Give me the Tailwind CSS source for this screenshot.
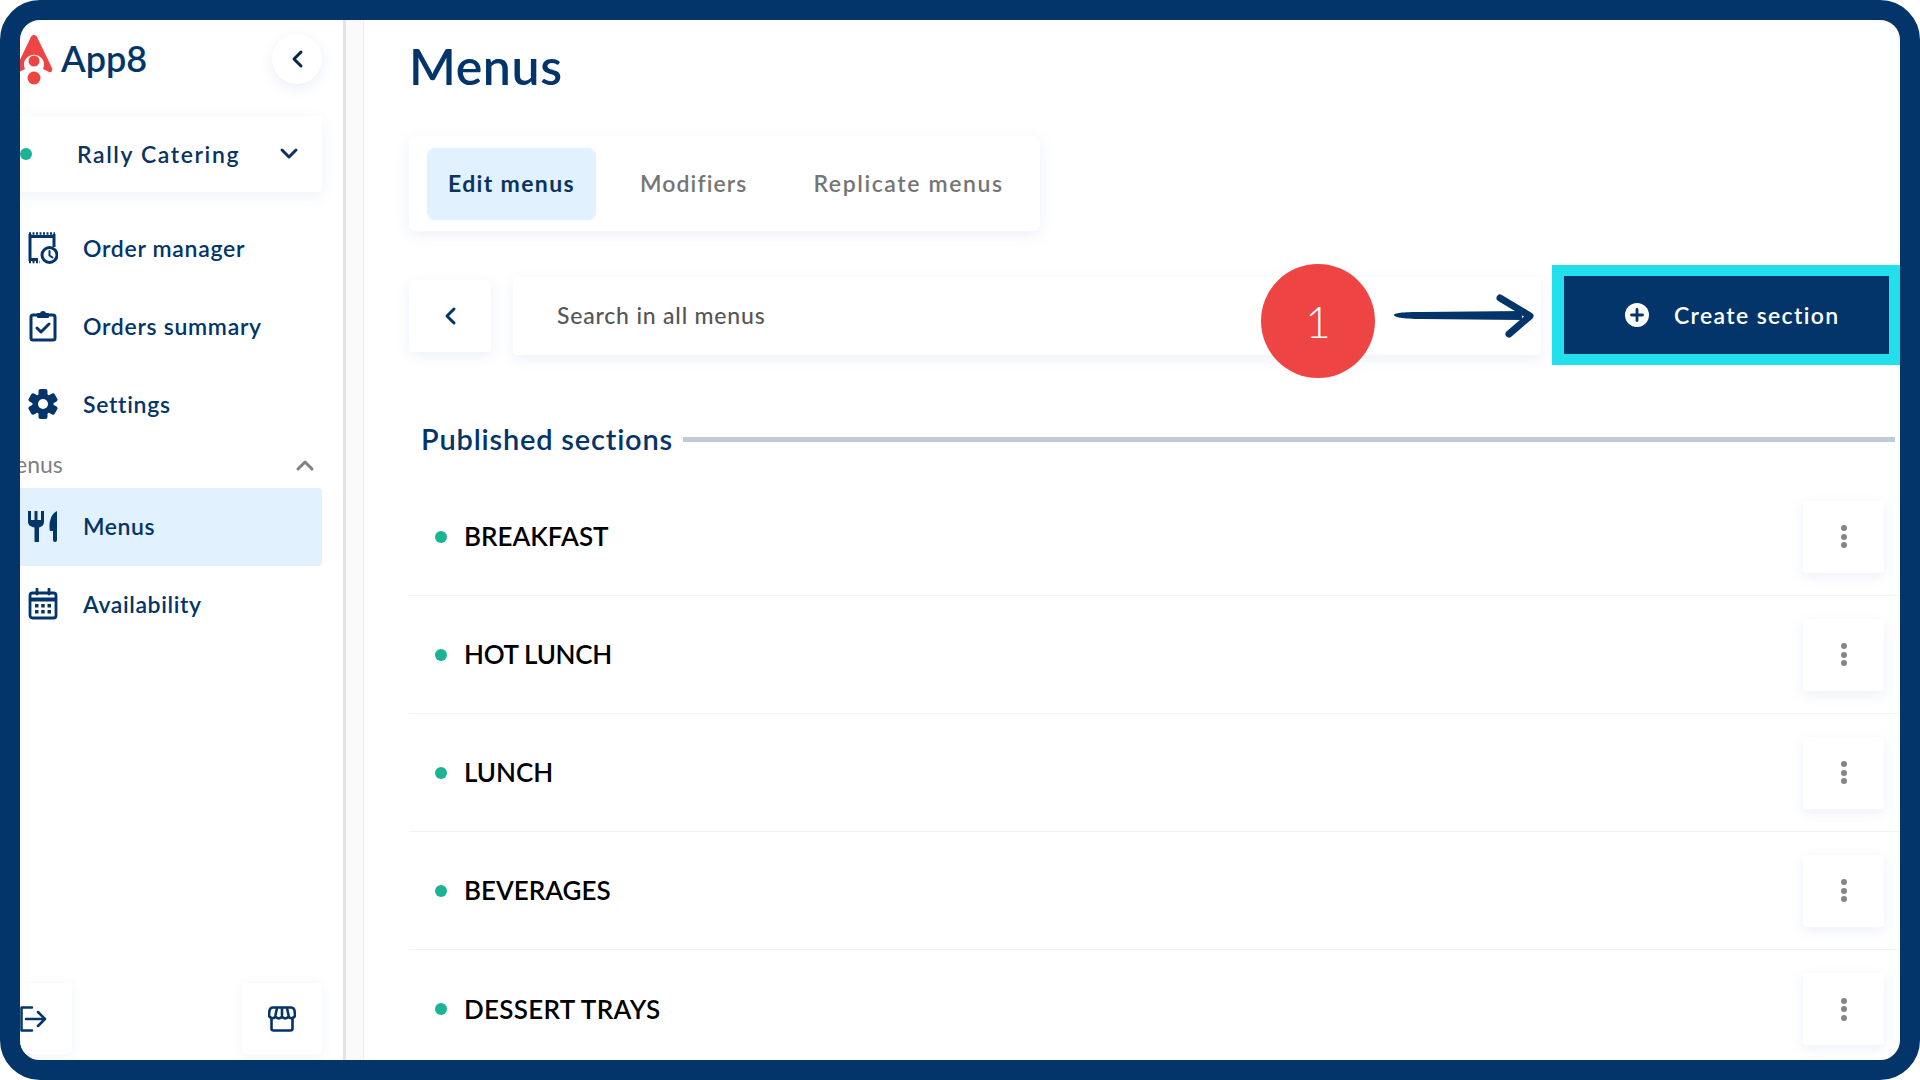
<!DOCTYPE html>
<html lang="en">
<head>
  <meta charset="UTF-8" />
  <title>App8 Menus</title>
  <script src="https://cdn.jsdelivr.net/npm/@tailwindcss/browser@4"></script>
</head>
<body class="bg-white font-['Lato',sans-serif] text-[#03356a]">
  <!-- navy frame, clips everything inside it -->
  <div class="h-[1080px] w-[1920px] border-[20px] border-[#03356a] rounded-[40px] overflow-hidden flex bg-white">

    <!-- Sidebar -->
    <aside class="-ml-[20px] w-[346px] h-[1040px] shrink-0 border-r-[3px] border-[#e3e3e3] pr-[21px] flex flex-col">
      <div class="h-[96px] pt-[14px] flex items-start justify-between">
        <div class="flex items-start">
          <svg class="ml-[14px] -mr-[2px]" width="40" height="52" viewBox="0 0 40 52">
            <path d="M20 1c2 0 3 1 4 4l14 29c1 3-1 5-3 4l-6-3a10 10 0 1 0-18 0l-6 3c-2 1-4-1-3-4L16 5c1-3 2-4 4-4z" fill="#ef4444" />
            <circle cx="20" cy="27" r="5.500" fill="#ef4444" />
            <circle cx="20" cy="44" r="6.500" fill="#ef4444" />
          </svg>
          <span class="ml-[9px] -mt-[1px] text-[36px] leading-[50px] font-semibold">App8</span>
        </div>
        <button class="w-[50px] h-[50px] rounded-full bg-white shadow-[0_4px_14px_rgba(30,90,170,0.10)] flex items-center justify-center">
          <svg width="14" height="20" viewBox="0 0 14 20" fill="none" stroke="#03264f" stroke-width="3" stroke-linecap="round" stroke-linejoin="round"><path d="M11 3l-7 7 7 7" /></svg>
        </button>
      </div>

      <div class="h-[76px] bg-white shadow-[0_4px_16px_rgba(30,90,170,0.08)] rounded-[4px] flex items-center">
        <span class="ml-[20px] w-[12px] h-[12px] rounded-full bg-[#1cb394]"></span>
        <span class="ml-[45px] text-[23px] font-semibold tracking-[1.6px] text-[#0a3361]">Rally Catering</span>
        <svg class="ml-auto mr-[23px]" width="20" height="14" viewBox="0 0 20 14" fill="none" stroke="#0a3361" stroke-width="3" stroke-linecap="round" stroke-linejoin="round"><path d="M3 3l7 7 7-7" /></svg>
      </div>

      <nav class="mt-[18px] flex flex-col">
        <a class="h-[78px] pb-[2px] flex items-center pl-[28px] gap-[25px] text-[23px] font-semibold tracking-[0.7px]">
          <svg class="w-[30px] h-[32px] shrink-0" viewBox="0 0 30 32" fill="none" stroke="#03356a" stroke-width="3">
            <path d="M2 2v27M26 2v13M2 4.500h24M2 27.500h8" />
            <path d="M1 1.500h26M1 30h11" stroke-width="2.500" stroke-dasharray="2 1.500" />
            <circle cx="21.500" cy="23" r="7.500" />
            <path d="M21.500 19v4.500l3 2" stroke-width="2" stroke-linecap="round" />
          </svg>
          Order manager
        </a>
        <a class="h-[78px] pb-[2px] flex items-center pl-[28px] gap-[25px] text-[23px] font-semibold tracking-[0.7px]">
          <svg class="w-[30px] h-[32px] shrink-0" viewBox="0 0 30 32" fill="none" stroke="#03356a" stroke-width="3" stroke-linecap="round" stroke-linejoin="round">
            <path d="M10 5H5a2 2 0 0 0-2 2v21a2 2 0 0 0 2 2h20a2 2 0 0 0 2-2V7a2 2 0 0 0-2-2h-5" />
            <path d="M10 7V4h3a2 2 0 0 1 4 0h3v3z" fill="#03356a" stroke-width="2" />
            <path d="M9 18l4 4 8-8" />
          </svg>
          Orders summary
        </a>
        <a class="h-[78px] pb-[2px] flex items-center pl-[28px] gap-[25px] text-[23px] font-semibold tracking-[0.7px]">
          <svg class="w-[30px] h-[32px] shrink-0" viewBox="0 0 30 32" fill="#03356a">
            <g>
              <rect x="10.500" y="1" width="9" height="30" rx="2" />
              <rect x="10.500" y="1" width="9" height="30" rx="2" transform="rotate(60 15 16)" />
              <rect x="10.500" y="1" width="9" height="30" rx="2" transform="rotate(120 15 16)" />
            </g>
            <circle cx="15" cy="16" r="10.500" />
            <circle cx="15" cy="16" r="5" fill="#fff" />
          </svg>
          Settings
        </a>
        <div class="h-[44px] pb-[2px] flex items-center justify-between pr-[7px] text-[23px] text-[#808080]">
          <span class="-ml-[6px] mb-[2px]">Menus</span>
          <svg width="20" height="14" viewBox="0 0 20 14" fill="none" stroke="#808080" stroke-width="3" stroke-linecap="round" stroke-linejoin="round"><path d="M3 11l7-7 7 7" /></svg>
        </div>
        <a class="h-[78px] pb-[2px] flex items-center pl-[28px] gap-[25px] text-[23px] font-semibold tracking-[0.6px] bg-[#e1f1fd] rounded-[4px]">
          <svg class="w-[30px] h-[32px] shrink-0" viewBox="0 0 30 32" fill="#03356a">
            <path d="M0 1h3v9h3.500V1h3v9H13V1h3v11c0 3-2.500 5-5 5.500V31a2 2 0 0 1-4.500 0V17.500C3 17 0 15 0 12z" />
            <path d="M29 1v29a2 2 0 0 1-4 0v-9h-3c-1.500-6 0-17 7-20z" />
          </svg>
          Menus
        </a>
        <a class="h-[78px] pb-[2px] flex items-center pl-[28px] gap-[25px] text-[23px] font-semibold tracking-[0.6px]">
          <svg class="w-[30px] h-[32px] shrink-0" viewBox="0 0 30 32" fill="none" stroke="#03356a" stroke-width="2.800">
            <rect x="2" y="5" width="26" height="25" rx="2.500" />
            <path d="M2 11.500h26" stroke-width="4" />
            <path d="M9 1v5M21 1v5" stroke-linecap="round" />
            <g fill="#03356a" stroke="none">
              <rect x="7" y="16" width="3.500" height="3.500" /><rect x="13.200" y="16" width="3.500" height="3.500" /><rect x="19.500" y="16" width="3.500" height="3.500" />
              <rect x="7" y="22" width="3.500" height="3.500" /><rect x="13.200" y="22" width="3.500" height="3.500" /><rect x="19.500" y="22" width="3.500" height="3.500" />
            </g>
          </svg>
          Availability
        </a>
      </nav>

      <div class="mt-auto mb-[6px] flex justify-between">
        <button class="w-[72px] h-[71px] bg-white rounded-[4px] shadow-[0_2px_12px_rgba(30,90,170,0.07)] flex items-center pl-[20px]">
          <svg width="27" height="26" viewBox="0 0 27 26" fill="none" stroke="#03356a" stroke-width="2.500" stroke-linecap="round" stroke-linejoin="round"><path d="M12 1.500H1.500v23H12M6 13h19M18 6l7 7-7 7" /></svg>
        </button>
        <button class="w-[80px] h-[71px] bg-white rounded-[4px] shadow-[0_2px_12px_rgba(30,90,170,0.07)] flex items-center justify-center">
          <svg width="28" height="26" viewBox="0 0 28 26" fill="none" stroke="#03356a" stroke-width="2.600" stroke-linejoin="round" stroke-linecap="round">
            <path d="M5 1.500h18c2 0 3 1 3.500 3l.5 4a3.500 3.500 0 0 1-6.500 2 3.800 3.800 0 0 1-6.500 0 3.800 3.800 0 0 1-6.500 0A3.500 3.500 0 0 1 1 8.500l.5-4c.5-2 1.500-3 3.500-3z" />
            <path d="M3.500 12v10.500a2 2 0 0 0 2 2h17a2 2 0 0 0 2-2V12M9 2L7.500 9M14 2v7M19 2l1.500 7" />
          </svg>
        </button>
      </div>
    </aside>

    <!-- strip between sidebar and content -->
    <div class="w-[18px] shrink-0 bg-[#fafafa] border-r border-[#eeeeee]"></div>

    <!-- Main -->
    <main class="flex-1 min-w-0 pl-[45px]">
      <h1 class="mt-[14px] h-[64px] leading-[64px] text-[50px] font-semibold tracking-[0.6px]">Menus</h1>

      <div class="mt-[38px] w-[631px] h-[95px] bg-white rounded-[6px] shadow-[0_4px_16px_rgba(30,90,170,0.09)] flex items-center pl-[18px] text-[23px] font-semibold tracking-[1.35px]">
        <span class="w-[169px] h-[72px] rounded-[8px] bg-[#e1f1fd] flex items-center justify-center text-[#0a3361] font-bold">Edit menus</span>
        <span class="ml-[44px] text-[#757575] tracking-[1.1px]">Modifiers</span>
        <span class="ml-[66px] text-[#757575] tracking-[1.6px]">Replicate menus</span>
      </div>

      <!-- toolbar with annotation over it -->
      <div class="relative mt-[34px] h-[100px] flex items-center">
        <button class="w-[82px] h-[72px] bg-white rounded-[4px] shadow-[0_4px_14px_rgba(30,90,170,0.09)] flex items-center justify-center mt-[2px]">
          <svg width="14" height="20" viewBox="0 0 14 20" fill="none" stroke="#03356a" stroke-width="3" stroke-linecap="round" stroke-linejoin="round"><path d="M11 3l-7 7 7 7" /></svg>
        </button>
        <div class="ml-[22px] w-[1028px] h-[78px] mt-[2px] pb-[2px] bg-white rounded-[4px] shadow-[0_4px_14px_rgba(30,90,170,0.09)] flex items-center pl-[44px] text-[23px] font-medium tracking-[0.8px] text-[#555555]">Search in all menus</div>
        <button class="ml-[11px] w-[348px] h-[100px] bg-[#03356a] border-[11px] border-[#22dfec] border-l-[12px] flex items-center pl-[61px] text-white text-[23px] font-semibold tracking-[1.35px]">
          <svg class="mr-[25px]" width="24" height="24" viewBox="0 0 24 24"><circle cx="12" cy="12" r="12" fill="#fff" /><path d="M12 6.500v11M6.500 12h11" stroke="#03356a" stroke-width="2.800" stroke-linecap="round" /></svg>
          Create section
        </button>

        <div class="absolute left-[852px] -top-[1px] w-[114px] h-[114px] rounded-full bg-[#ef4444] flex items-center justify-center text-white text-[44px] font-light">1</div>
        <svg class="absolute left-[983px] top-[29px]" width="144" height="44" viewBox="0 0 144 44" fill="none" stroke="#03356a" stroke-linecap="round" stroke-linejoin="round">
          <path d="M2 21c0-2 8-3 28-3l100-1v9l-100-1C10 25 2 23 2 21z" fill="#03356a" stroke="none" />
          <path d="M108 4l30 18-21 18" stroke-width="7" />
        </svg>
      </div>

      <div class="mt-[51px] pl-[12px] pr-[5px] flex items-center gap-[10px]">
        <h2 class="text-[29px] leading-[46px] font-semibold tracking-[0.8px] whitespace-nowrap">Published sections</h2>
        <div class="flex-1 h-[5px] bg-[#bfcbd6]"></div>
      </div>

      <ul class="mt-[16px]">
        <li class="h-[118px] border-b border-[#f3f3f3] flex items-center pr-[16px]">
          <span class="ml-[26px] w-[12px] h-[12px] rounded-full bg-[#1cb394]"></span>
          <span class="ml-[17px] text-[26px] font-semibold text-black">BREAKFAST</span>
          <button class="ml-auto w-[81px] h-[72px] bg-white rounded-[4px] shadow-[0_4px_14px_rgba(30,90,170,0.09)] flex flex-col items-center justify-center gap-[2.500px]"><i class="w-[6px] h-[6px] rounded-full bg-[#858585]"></i><i class="w-[6px] h-[6px] rounded-full bg-[#858585]"></i><i class="w-[6px] h-[6px] rounded-full bg-[#858585]"></i></button>
        </li>
        <li class="h-[118px] border-b border-[#f3f3f3] flex items-center pr-[16px]">
          <span class="ml-[26px] w-[12px] h-[12px] rounded-full bg-[#1cb394]"></span>
          <span class="ml-[17px] text-[26px] font-semibold tracking-[-0.3px] text-black">HOT LUNCH</span>
          <button class="ml-auto w-[81px] h-[72px] bg-white rounded-[4px] shadow-[0_4px_14px_rgba(30,90,170,0.09)] flex flex-col items-center justify-center gap-[2.500px]"><i class="w-[6px] h-[6px] rounded-full bg-[#858585]"></i><i class="w-[6px] h-[6px] rounded-full bg-[#858585]"></i><i class="w-[6px] h-[6px] rounded-full bg-[#858585]"></i></button>
        </li>
        <li class="h-[118px] border-b border-[#f3f3f3] flex items-center pr-[16px]">
          <span class="ml-[26px] w-[12px] h-[12px] rounded-full bg-[#1cb394]"></span>
          <span class="ml-[17px] text-[26px] font-semibold text-black">LUNCH</span>
          <button class="ml-auto w-[81px] h-[72px] bg-white rounded-[4px] shadow-[0_4px_14px_rgba(30,90,170,0.09)] flex flex-col items-center justify-center gap-[2.500px]"><i class="w-[6px] h-[6px] rounded-full bg-[#858585]"></i><i class="w-[6px] h-[6px] rounded-full bg-[#858585]"></i><i class="w-[6px] h-[6px] rounded-full bg-[#858585]"></i></button>
        </li>
        <li class="h-[118px] border-b border-[#f3f3f3] flex items-center pr-[16px]">
          <span class="ml-[26px] w-[12px] h-[12px] rounded-full bg-[#1cb394]"></span>
          <span class="ml-[17px] text-[26px] font-semibold text-black">BEVERAGES</span>
          <button class="ml-auto w-[81px] h-[72px] bg-white rounded-[4px] shadow-[0_4px_14px_rgba(30,90,170,0.09)] flex flex-col items-center justify-center gap-[2.500px]"><i class="w-[6px] h-[6px] rounded-full bg-[#858585]"></i><i class="w-[6px] h-[6px] rounded-full bg-[#858585]"></i><i class="w-[6px] h-[6px] rounded-full bg-[#858585]"></i></button>
        </li>
        <li class="h-[118px] flex items-center pr-[16px]">
          <span class="ml-[26px] w-[12px] h-[12px] rounded-full bg-[#1cb394]"></span>
          <span class="ml-[17px] text-[26px] font-semibold tracking-[0.3px] text-black">DESSERT TRAYS</span>
          <button class="ml-auto w-[81px] h-[72px] bg-white rounded-[4px] shadow-[0_4px_14px_rgba(30,90,170,0.09)] flex flex-col items-center justify-center gap-[2.500px]"><i class="w-[6px] h-[6px] rounded-full bg-[#858585]"></i><i class="w-[6px] h-[6px] rounded-full bg-[#858585]"></i><i class="w-[6px] h-[6px] rounded-full bg-[#858585]"></i></button>
        </li>
      </ul>
    </main>
  </div>
</body>
</html>
